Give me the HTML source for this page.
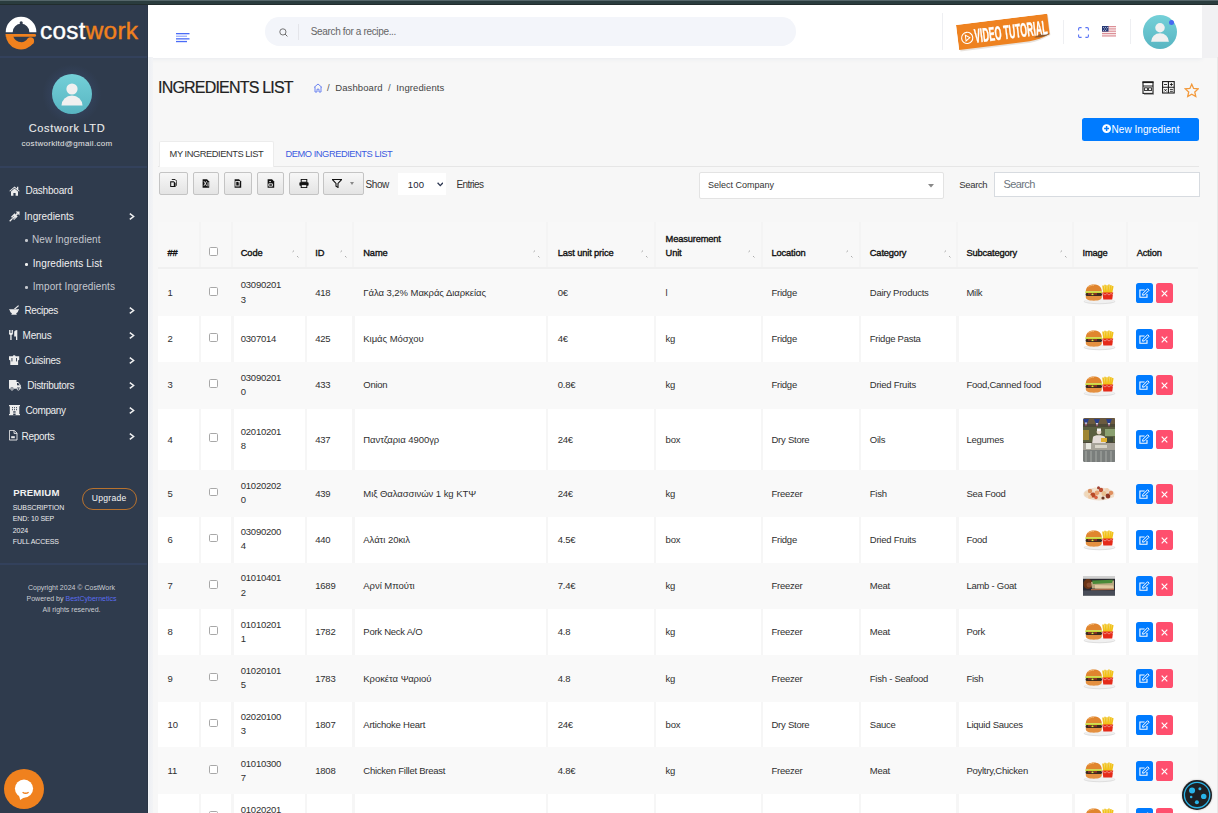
<!DOCTYPE html>
<html><head><meta charset="utf-8">
<style>
*{box-sizing:border-box;margin:0;padding:0}
html,body{width:1218px;height:813px;overflow:hidden;background:#f7f7f7;font-family:"Liberation Sans",sans-serif;color:#222}
.abs{position:absolute;white-space:nowrap}
#topbar{z-index:5;position:absolute;left:0;top:0;width:1218px;height:5px;background:#2a3c3e;border-top:1px solid #55666a;border-bottom:1px solid #222d2d}
#side{position:absolute;left:0;top:0;width:148px;height:813px;background:#2f3b4d;border-right:1px solid #2a3545}
.sep{position:absolute;left:0;width:147px;height:2px;background:#33415c}
.mi{position:absolute;left:0;width:148px;height:14px;color:#f2f2f2;font-size:10px;line-height:14px;letter-spacing:.1px}
.mi .ic{position:absolute;left:9px;top:1px;width:11px;height:11px}
.mi .t{position:absolute;top:0}
.mi .ch{position:absolute;left:128px;top:3px;width:6px;height:8px}
.sub{color:#c9ccd2}
#header{position:absolute;left:148px;top:5px;width:1054px;height:53px;background:#fff;box-shadow:0 1px 4px rgba(110,130,170,.10)}
#rstrip{position:absolute;left:1202px;top:5px;width:16px;height:53px;background:#f1f1f3}
</style></head>
<body>
<div id="topbar"></div>
<div id="side"></div>
<svg class="abs" style="left:2px;top:12px" width="40" height="40" viewBox="0 0 40 40">
    <path d="M3.7 20.2 A15.35 15.35 0 0 1 34.4 20.2 L27.4 20.2 A8.35 8.35 0 0 0 10.7 20.2 Z" fill="#fff"/>
    <circle cx="19.2" cy="10.9" r="1.6" fill="#2f3b4d"/>
    <path d="M3.7 22.1 L32.7 22.1 A1.35 1.35 0 0 1 32.7 24.8 L3.7 24.8Z" fill="#f0811e"/>
    <path d="M7.4 22.1 A11.65 11.65 0 0 0 28.5 28.95" fill="none" stroke="#f0811e" stroke-width="7.4"/>
    <circle cx="28.5" cy="28.95" r="3.6" fill="#f0811e"/>
</svg>
<div class="abs" style="left:40px;top:16px;font-size:24.3px;letter-spacing:.3px;line-height:30px;-webkit-text-stroke:.4px currentColor"><span style="color:#fff">cost</span><span style="color:#f0811e">work</span></div>
<div class="sep" style="top:56px"></div>
<div class="abs" style="left:42px;top:64px;width:60px;height:60px;border-radius:50%;background:radial-gradient(circle,rgba(60,80,120,.35) 40%,rgba(47,59,77,0) 70%)"></div>
<svg class="abs" style="left:52px;top:74px" width="40" height="40" viewBox="0 0 40 40">
    <defs><linearGradient id="av" x1="0" y1="0" x2="0" y2="1"><stop offset="0" stop-color="#74d0d8"/><stop offset="1" stop-color="#58b5c2"/></linearGradient></defs>
    <circle cx="20" cy="20" r="20" fill="url(#av)"/>
    <circle cx="20" cy="15" r="5.6" fill="#f0f0f0"/>
    <path d="M9.5 31.5 A10.5 10 0 0 1 30.5 31.5 Z" fill="#f0f0f0"/>
</svg>
<div class="abs" style="left:0;width:148px;text-align:center;top:121px;font-size:11px;letter-spacing:.64px;color:#ececec;line-height:14px;padding-right:14px;-webkit-text-stroke:.1px currentColor">Costwork LTD</div>
<div class="abs" style="left:0;width:148px;text-align:center;top:138px;font-size:8px;letter-spacing:.3px;color:#e6e6e6;line-height:12px;padding-right:14px">costworkltd@gmail.com</div>
<div class="sep" style="top:165.5px"></div>
<svg class="abs" style="left:9px;top:185.5px" width="11" height="10" viewBox="0 0 11 10"><path d="M0.3 5 L5.5 0.5 L8 2.6 V0.8 H9.3 V3.7 L10.7 5 L10 5.6 L5.5 1.7 L1 5.6Z" fill="#ededed"/><path d="M2 5.5 L5.5 2.5 L9 5.5 V9.8 H6.6 V7 H4.4 V9.8 H2Z" fill="#ededed"/></svg>
<div class="abs" style="left:25.4px;top:184.3px;font-size:10px;line-height:14px;letter-spacing:-0.2px;color:#eeeeee">Dashboard</div>
<svg class="abs" style="left:8.5px;top:210.5px" width="11" height="11" viewBox="0 0 11 11"><path d="M2.03 5.86 L5.57 2.32 L8.68 5.43 L5.14 8.97Z" fill="#ededed"/><path d="M3.6 7.4 L0.7 10.3" stroke="#ededed" stroke-width="1.3"/><path d="M7.1 3.9 L8.6 2.4" stroke="#ededed" stroke-width="1.6"/><path d="M6.6 0.5 L10.5 4.4 L10.6 0.4Z" fill="#ededed"/><path d="M3.3 6.6 L4.6 5.3 M4.6 7.9 L5.9 6.6" stroke="#2f3b4d" stroke-width=".7"/></svg>
<div class="abs" style="left:24.3px;top:209.7px;font-size:10px;line-height:14px;letter-spacing:0px;color:#eeeeee">Ingredients</div>
<svg class="abs" style="left:128.5px;top:212.5px" width="6" height="7" viewBox="0 0 6 7"><path d="M0.8 0.6 L4.6 3.5 L0.8 6.4" fill="none" stroke="#f2f2f2" stroke-width="1.5"/></svg>
<div class="abs" style="left:25px;top:239.4px;width:2.6px;height:2.6px;border-radius:50%;background:#c5c8ce"></div>
<div class="abs" style="left:32px;top:233.0px;font-size:10px;line-height:14px;letter-spacing:0.1px;color:#c5c8ce">New Ingredient</div>
<div class="abs" style="left:25px;top:263.0px;width:2.6px;height:2.6px;border-radius:50%;background:#f2f2f2"></div>
<div class="abs" style="left:32.7px;top:256.6px;font-size:10px;line-height:14px;letter-spacing:0.1px;color:#f2f2f2">Ingredients List</div>
<div class="abs" style="left:25px;top:286.0px;width:2.6px;height:2.6px;border-radius:50%;background:#c5c8ce"></div>
<div class="abs" style="left:32.7px;top:279.6px;font-size:10px;line-height:14px;letter-spacing:0.1px;color:#c5c8ce">Import Ingredients</div>
<svg class="abs" style="left:9px;top:305px" width="10.5" height="10" viewBox="0 0 10.5 10"><path d="M0.2 4.2 H10 V5.2 H9.3 C9.3 6.8 8.3 7.8 7.2 8.2 L7.8 9.8 H2.3 L2.9 8.2 C1.8 7.8 0.9 6.8 0.9 5.2 H0.2Z" fill="#ededed"/><path d="M4.8 4 L9.2 0.2 L10 1 L6.6 4Z" fill="#ededed"/></svg>
<div class="abs" style="left:24.5px;top:304.0px;font-size:10px;line-height:14px;letter-spacing:-0.4px;color:#eeeeee">Recipes</div>
<svg class="abs" style="left:128.5px;top:307px" width="6" height="7" viewBox="0 0 6 7"><path d="M0.8 0.6 L4.6 3.5 L0.8 6.4" fill="none" stroke="#f2f2f2" stroke-width="1.5"/></svg>
<svg class="abs" style="left:9px;top:330px" width="8.5" height="10" viewBox="0 0 8.5 10"><path d="M0 0 H0.9 V3 H1.5 V0 H2.4 V3 H3 V0 H3.9 V4.2 L2.6 5 V10 H1.3 V5 L0 4.2Z" fill="#ededed"/><path d="M8.3 0 V10 H7 V6.4 H5.2 V2.2 C5.2 1 6.3 0 8.3 0Z" fill="#ededed"/></svg>
<div class="abs" style="left:22.5px;top:329.0px;font-size:10px;line-height:14px;letter-spacing:-0.2px;color:#eeeeee">Menus</div>
<svg class="abs" style="left:128.5px;top:332px" width="6" height="7" viewBox="0 0 6 7"><path d="M0.8 0.6 L4.6 3.5 L0.8 6.4" fill="none" stroke="#f2f2f2" stroke-width="1.5"/></svg>
<svg class="abs" style="left:9px;top:354.5px" width="10.5" height="10.5" viewBox="0 0 10.5 10.5"><path d="M0 1.2 H3.8 C4 0.5 4.4 0.2 5.2 0.2 C6 0.2 6.4 0.5 6.6 1.2 H10.2 V4.8 L9.1 5.4 V10.3 H1.3 V5.4 L0 4.8Z" fill="#ededed"/><rect x="2.5" y="3" width="0.9" height="3.4" fill="#2f3b4d"/><rect x="7" y="3" width="0.9" height="3.4" fill="#2f3b4d"/></svg>
<div class="abs" style="left:24.5px;top:354.0px;font-size:10px;line-height:14px;letter-spacing:-0.3px;color:#eeeeee">Cuisines</div>
<svg class="abs" style="left:128.5px;top:357px" width="6" height="7" viewBox="0 0 6 7"><path d="M0.8 0.6 L4.6 3.5 L0.8 6.4" fill="none" stroke="#f2f2f2" stroke-width="1.5"/></svg>
<svg class="abs" style="left:9px;top:380px" width="13" height="10.5" viewBox="0 0 13 10.5"><path d="M0 0 H7.5 V2 H9.2 L11.8 5.2 V7.6 L12.6 8.1 L11.6 8.7 H11 A1.6 1.6 0 0 0 7.8 8.7 H4.6 A1.6 1.6 0 0 0 1.4 8.7 H0Z" fill="#ededed"/><path d="M8 3 L9.2 3 L10.8 5.3 L8 5.3Z" fill="#2f3b4d"/><circle cx="3" cy="9" r="1.2" fill="none" stroke="#ededed" stroke-width="0.8"/><circle cx="9.4" cy="9" r="1.2" fill="none" stroke="#ededed" stroke-width="0.8"/></svg>
<div class="abs" style="left:27.3px;top:379.0px;font-size:10px;line-height:14px;letter-spacing:-0.3px;color:#eeeeee">Distributors</div>
<svg class="abs" style="left:128.5px;top:382px" width="6" height="7" viewBox="0 0 6 7"><path d="M0.8 0.6 L4.6 3.5 L0.8 6.4" fill="none" stroke="#f2f2f2" stroke-width="1.5"/></svg>
<svg class="abs" style="left:9px;top:405px" width="11" height="10.5" viewBox="0 0 11 10.5"><path d="M0 0 H11 V1.2 H10.3 V9.1 H11 V10.2 H0 V9.1 H0.8 V1.2 H0Z" fill="#ededed"/><g fill="#2f3b4d"><rect x="3" y="2.2" width="1" height="1"/><rect x="5" y="2.2" width="1" height="1"/><rect x="7" y="2.2" width="1" height="1"/><rect x="3" y="4.2" width="1" height="1"/><rect x="5" y="4.2" width="1" height="1"/><rect x="7" y="4.2" width="1" height="1"/><rect x="4.2" y="6.3" width="2.4" height="1.3"/><rect x="4.2" y="8.6" width="2.4" height="1.6"/></g></svg>
<div class="abs" style="left:25.5px;top:404.0px;font-size:10px;line-height:14px;letter-spacing:-0.4px;color:#eeeeee">Company</div>
<svg class="abs" style="left:128.5px;top:407px" width="6" height="7" viewBox="0 0 6 7"><path d="M0.8 0.6 L4.6 3.5 L0.8 6.4" fill="none" stroke="#f2f2f2" stroke-width="1.5"/></svg>
<svg class="abs" style="left:9px;top:430px" width="8.5" height="10.5" viewBox="0 0 8.5 10.5"><path d="M0.4 0.4 H5.3 L8 3.1 V10 H0.4Z" fill="none" stroke="#ededed" stroke-width="0.9"/><path d="M5 0.5 V3.4 H8" fill="none" stroke="#ededed" stroke-width="0.9"/><rect x="2.2" y="6.2" width="3.6" height="2" fill="#ededed"/></svg>
<div class="abs" style="left:21.6px;top:429.5px;font-size:10px;line-height:14px;letter-spacing:-0.3px;color:#eeeeee">Reports</div>
<svg class="abs" style="left:128.5px;top:432.5px" width="6" height="7" viewBox="0 0 6 7"><path d="M0.8 0.6 L4.6 3.5 L0.8 6.4" fill="none" stroke="#f2f2f2" stroke-width="1.5"/></svg>
<div class="abs" style="left:13.2px;top:486px;font-size:9.6px;font-weight:bold;letter-spacing:.15px;color:#f2f2f2;line-height:14px">PREMIUM</div>
<div class="abs" style="left:12.8px;top:502px;font-size:7px;letter-spacing:-.1px;color:#ededed;line-height:11.3px;white-space:normal;width:60px">SUBSCRIPTION<br>END: 10 SEP<br>2024<br>FULL ACCESS</div>
<div class="abs" style="left:81.7px;top:488px;width:55px;height:21.5px;border:1.3px solid #b8722e;border-radius:11px;color:#f4f4f4;font-size:8.6px;line-height:19px;text-align:center;letter-spacing:.25px">Upgrade</div>
<div class="sep" style="top:563px"></div>
<div class="abs" style="left:0;width:148px;text-align:center;top:582px;font-size:7px;color:#c9ccd2;line-height:11px;padding-right:5px">Copyright 2024 &copy; CostWork<br>Powered by <span style="color:#5b6cf0">BestCybernetics</span><br>All rights reserved.</div>
<div class="abs" style="left:3.8px;top:768.8px;width:40px;height:40px;border-radius:50%;background:#f0811e"></div>
<svg class="abs" style="left:14px;top:778.5px" width="20" height="22" viewBox="0 0 20 22"><circle cx="10" cy="9.6" r="9.1" fill="#fff"/><path d="M4.5 14.5 L6.2 21 L11.5 17.5Z" fill="#fff"/><path d="M8.6 13.2 Q11.6 15.4 14.6 13.2" fill="none" stroke="#f0811e" stroke-width="1.4"/></svg>
<div id="header"></div>
<div id="rstrip"></div>
<svg class="abs" style="left:176px;top:32.8px" width="14" height="10" viewBox="0 0 14 10"><g fill="#4a6cf7"><rect x="0" y="0" width="13.5" height="1.3"/><rect x="0" y="2.6" width="11" height="1.3" opacity=".55"/><rect x="0" y="5.2" width="13.5" height="1.3"/><rect x="0" y="7.9" width="11" height="1.3"/></g></svg>
<div class="abs" style="left:264.5px;top:17.3px;width:531.5px;height:28.4px;border-radius:14.2px;background:#f3f5fa"></div>
<svg class="abs" style="left:278.5px;top:27.8px" width="9" height="9" viewBox="0 0 9 9"><circle cx="3.9" cy="3.9" r="3.1" fill="none" stroke="#666" stroke-width="0.9"/><path d="M6.1 6.1 L8.4 8.4" stroke="#666" stroke-width="1"/></svg>
<div class="abs" style="left:298px;top:24px;width:1px;height:15.5px;background:#e4e5ea"></div>
<div class="abs" style="left:310.8px;top:25px;font-size:10px;line-height:14px;letter-spacing:-.35px;color:#666">Search for a recipe...</div>
<div class="abs" style="left:942px;top:13px;width:1px;height:37px;background:#eeeff2"></div>
<div class="abs" style="left:956.3px;top:24.7px;width:93px;height:28px;transform:rotate(-7.07deg);transform-origin:0 0">
<svg style="position:absolute;left:0;top:0" width="93" height="28" viewBox="0 0 93 28"><defs><linearGradient id="curl" x1="0" y1="0" x2="1" y2="1"><stop offset="0" stop-color="#c76f22"/><stop offset="1" stop-color="#5e4a3a"/></linearGradient></defs>
<path d="M1.2 1.5 L92.5 1.5 L92.5 21.5 C86 24 80 26 72 26.8 L1.2 26.8Z" fill="#d8d0c8" opacity=".6"/>
<path d="M0 0 L91.8 0 L91.8 20.5 C85 23.3 79 24.8 71 25.3 L0 25.3Z" fill="#ee8220"/>
<path d="M91.8 20.5 C88 17.5 83 17.8 76 22 C82 23 87 22.5 91.8 20.5Z" fill="url(#curl)"/>
<circle cx="9.5" cy="14.2" r="5.6" fill="none" stroke="#fff" stroke-width="1.1"/><path d="M8 11.3 L12.2 14.2 L8 17.1Z" fill="none" stroke="#fff" stroke-width="1"/>
</svg>
<span style="position:absolute;left:16.5px;top:-1.5px;line-height:28px;font-size:19.5px;font-weight:bold;color:#fff;-webkit-text-stroke:.4px #fff;display:inline-block;transform:scaleX(.445);transform-origin:0 50%;white-space:nowrap">VIDEO TUTORIAL</span>
</div>
<div class="abs" style="left:1063.3px;top:20px;width:1px;height:23.5px;background:#eeeff2"></div>
<svg class="abs" style="left:1077.5px;top:27px" width="11" height="11" viewBox="0 0 11 11"><path d="M0.6 3.6 V1.8 A1.2 1.2 0 0 1 1.8 0.6 H3.6 M7.4 0.6 H9.2 A1.2 1.2 0 0 1 10.4 1.8 V3.6 M10.4 7.4 V9.2 A1.2 1.2 0 0 1 9.2 10.4 H7.4 M3.6 10.4 H1.8 A1.2 1.2 0 0 1 0.6 9.2 V7.4" fill="none" stroke="#5a74f5" stroke-width="1.1"/></svg>
<svg class="abs" style="left:1101.8px;top:25.8px" width="14.2" height="11.4" viewBox="0 0 14.2 11.4"><rect width="14.2" height="11.4" fill="#fff"/><g fill="#d9848c"><rect y="0" width="14.2" height="0.9"/><rect y="1.75" width="14.2" height="0.9"/><rect y="3.5" width="14.2" height="0.9"/><rect y="5.25" width="14.2" height="0.9"/><rect y="7" width="14.2" height="0.9"/><rect y="8.75" width="14.2" height="0.9"/><rect y="10.5" width="14.2" height="0.9"/></g><rect width="6.5" height="5.6" fill="#2a3c78"/><g fill="#c8cde0"><rect x="1" y="1" width="1" height="0.8"/><rect x="3" y="1" width="1" height="0.8"/><rect x="5" y="1" width="1" height="0.8"/><rect x="2" y="2.6" width="1" height="0.8"/><rect x="4" y="2.6" width="1" height="0.8"/><rect x="1" y="4" width="1" height="0.8"/><rect x="3" y="4" width="1" height="0.8"/></g></svg>
<div class="abs" style="left:1129.5px;top:19px;width:1px;height:25px;background:#eeeff2"></div>
<svg class="abs" style="left:1142.8px;top:14.8px" width="34" height="34" viewBox="0 0 40 40"><defs><linearGradient id="av2" x1="0" y1="0" x2="0" y2="1"><stop offset="0" stop-color="#74d0d8"/><stop offset="1" stop-color="#58b5c2"/></linearGradient></defs><circle cx="20" cy="20" r="20" fill="url(#av2)"/><circle cx="20" cy="15" r="5.6" fill="#f0f0f0"/><path d="M9.5 31.5 A10.5 10 0 0 1 30.5 31.5 Z" fill="#f0f0f0"/></svg>
<div class="abs" style="left:1169.3px;top:19.6px;width:5px;height:5px;border-radius:50%;background:#4668f2"></div>

<div class="abs" style="left:158px;top:78px;font-size:16px;line-height:20px;letter-spacing:-.8px;color:#222;-webkit-text-stroke:.2px #222">INGREDIENTS LIST</div>
<svg class="abs" style="left:312.5px;top:82.5px" width="10" height="10" viewBox="0 0 10 10"><path d="M1 4.5 L5 1 L9 4.5 M2 3.8 V9 H4 V6.2 H6 V9 H8 V3.8" fill="none" stroke="#6d84f0" stroke-width="1"/></svg>
<div class="abs" style="left:327px;top:81px;font-size:9.5px;line-height:13px;color:#555;letter-spacing:.1px">/&nbsp;&nbsp;<span style="color:#444">Dashboard</span>&nbsp;&nbsp;/&nbsp;&nbsp;<span style="color:#444">Ingredients</span></div>


<!-- right icons -->
<svg class="abs" style="left:1141.5px;top:80.5px" width="12.5" height="14" viewBox="0 0 12.5 14"><rect x="1" y="1" width="10" height="11.4" fill="#fff" stroke="#1a1a1a" stroke-width="1.1"/><rect x="0.5" y="0.5" width="11" height="1.6" fill="#1a1a1a"/><path d="M1 5 H11" stroke="#1a1a1a" stroke-width="1"/><rect x="2.6" y="6.8" width="2.8" height="2.8" fill="none" stroke="#1a1a1a" stroke-width=".9"/><rect x="6.6" y="6.8" width="2.8" height="2.8" fill="none" stroke="#1a1a1a" stroke-width=".9"/><path d="M2 13.3 H11.8 V2" fill="none" stroke="#777" stroke-width=".8"/></svg>
<svg class="abs" style="left:1161.5px;top:80.8px" width="13" height="12.8" viewBox="0 0 13 12.8"><rect x="0.6" y="0.6" width="11.6" height="11.4" fill="#fff" stroke="#1a1a1a" stroke-width="1.1"/><path d="M6.4 0.6 V12 M0.6 6.3 H12.2" stroke="#1a1a1a" stroke-width="1.1"/><path d="M2 3.5 H5 M7.9 3.5 H10.9 M9.4 2 V5 M7.9 8.4 H10.9 M7.9 10.3 H10.9 M2.3 8.1 L4.7 10.5 M4.7 8.1 L2.3 10.5" stroke="#1a1a1a" stroke-width=".9"/></svg>
<svg class="abs" style="left:1183.5px;top:82.5px" width="15.5" height="15" viewBox="0 0 24 23"><path d="M12 1.8 L14.9 8.3 L22 9 L16.7 13.8 L18.2 20.8 L12 17.2 L5.8 20.8 L7.3 13.8 L2 9 L9.1 8.3Z" fill="none" stroke="#f39a3c" stroke-width="2"/></svg>
<div class="abs" style="left:1082.2px;top:118px;width:116.8px;height:22.8px;background:#007bff;border-radius:2.5px"></div>
<svg class="abs" style="left:1102px;top:124.3px" width="9.2" height="9.2" viewBox="0 0 10 10"><circle cx="5" cy="5" r="4.8" fill="#fff"/><path d="M5 2.3 V7.7 M2.3 5 H7.7" stroke="#007bff" stroke-width="1.6"/></svg>
<div class="abs" style="left:1111.5px;top:123px;font-size:10px;line-height:14px;color:#fff;letter-spacing:.05px">New Ingredient</div>

<!-- tabs -->
<div class="abs" style="left:158px;top:166px;width:1041px;height:1px;background:#e6e6e6"></div>
<div class="abs" style="left:158.5px;top:141.4px;width:115px;height:25.6px;background:#fff;border:1px solid #ececec;border-bottom:none;border-radius:2px 2px 0 0"></div>
<div class="abs" style="left:169.6px;top:147.5px;font-size:9.3px;line-height:13px;color:#333;letter-spacing:-.45px">MY INGREDIENTS LIST</div>
<div class="abs" style="left:285.5px;top:147.5px;font-size:9.3px;line-height:13px;color:#3a5ae0;letter-spacing:-.45px">DEMO INGREDIENTS LIST</div>
<div class="abs" style="left:159.1px;top:172.1px;width:28.7px;height:22.8px;border:1px solid #c4c4c4;border-radius:2px;background:linear-gradient(#f7f7f7,#e4e4e4)"></div>
<div class="abs" style="left:192.9px;top:172.1px;width:26.6px;height:22.8px;border:1px solid #c4c4c4;border-radius:2px;background:linear-gradient(#f7f7f7,#e4e4e4)"></div>
<div class="abs" style="left:224.2px;top:172.1px;width:27.5px;height:22.8px;border:1px solid #c4c4c4;border-radius:2px;background:linear-gradient(#f7f7f7,#e4e4e4)"></div>
<div class="abs" style="left:256.7px;top:172.1px;width:27.8px;height:22.8px;border:1px solid #c4c4c4;border-radius:2px;background:linear-gradient(#f7f7f7,#e4e4e4)"></div>
<div class="abs" style="left:289.2px;top:172.1px;width:29.4px;height:22.8px;border:1px solid #c4c4c4;border-radius:2px;background:linear-gradient(#f7f7f7,#e4e4e4)"></div>
<div class="abs" style="left:323.3px;top:172.1px;width:40.7px;height:22.8px;border:1px solid #c4c4c4;border-radius:2px;background:linear-gradient(#f7f7f7,#e4e4e4)"></div>
<svg class="abs" style="left:169.4px;top:178.6px" width="8" height="9" viewBox="0 0 8 9"><path d="M1.2 2.2 H4.8 L6.6 4 V8 H1.2Z" fill="#111"/><path d="M2.8 0.4 H6 L7.8 2.2 V6.8" fill="none" stroke="#111" stroke-width="1"/><rect x="2.2" y="3.4" width="2.6" height="3.6" fill="#eee"/></svg>
<svg class="abs" style="left:202.2px;top:178.6px" width="8" height="9" viewBox="0 0 8 9"><path d="M0.6 0.3 H5 L7.2 2.5 V8.7 H0.6Z" fill="#111"/><path d="M2 2.2 L4.6 6.8 M4.6 2.2 L2 6.8" stroke="#eee" stroke-width=".9"/><rect x="5.6" y="3.2" width=".9" height="4.2" fill="#eee"/></svg>
<svg class="abs" style="left:233.9px;top:178.6px" width="8" height="9" viewBox="0 0 8 9"><path d="M0.6 0.3 H5 L7.2 2.5 V8.7 H0.6Z" fill="#111"/><rect x="1.8" y="2.4" width="3.4" height="4.6" fill="none" stroke="#eee" stroke-width=".9"/><rect x="4.6" y="2" width="1" height="1.6" fill="#eee"/></svg>
<svg class="abs" style="left:266.6px;top:178.6px" width="8" height="9" viewBox="0 0 8 9"><path d="M0.6 0.3 H5 L7.2 2.5 V8.7 H0.6Z" fill="#111"/><path d="M1.8 4.8 H5.4 V7.2 H1.8Z M2.2 2.6 H4" fill="none" stroke="#eee" stroke-width=".9"/></svg>
<svg class="abs" style="left:298.9px;top:178.6px" width="10" height="9" viewBox="0 0 10 9"><rect x="2.2" y="0.4" width="5.6" height="2.8" fill="none" stroke="#111" stroke-width="1"/><rect x="0.4" y="3.2" width="9.2" height="3.6" rx=".8" fill="#111"/><rect x="2.2" y="5.6" width="5.6" height="3" fill="#eee" stroke="#111" stroke-width="1"/></svg>
<svg class="abs" style="left:332.3px;top:178.6px" width="10" height="9" viewBox="0 0 10 9"><path d="M0.3 0.4 H9.7 L6 4.4 V8.4 L4 7.2 V4.4Z" fill="none" stroke="#111" stroke-width="1.1"/></svg>
<svg class="abs" style="left:350px;top:181.5px" width="4" height="3" viewBox="0 0 4 3"><path d="M0 0 H4 L2 3Z" fill="#888"/></svg>
<div class="abs" style="left:365.6px;top:177.5px;font-size:10px;line-height:14px;color:#333;letter-spacing:-.45px">Show</div>
<div class="abs" style="left:398.2px;top:173px;width:47.8px;height:22px;background:#fff"></div>
<div class="abs" style="left:407.7px;top:177.5px;font-size:9.5px;line-height:14px;color:#1b2433;letter-spacing:.3px">100</div>
<svg class="abs" style="left:436.8px;top:181.7px" width="6.5" height="5" viewBox="0 0 6.5 5"><path d="M0.6 0.8 L3.25 3.6 L5.9 0.8" fill="none" stroke="#2b3550" stroke-width="1.3"/></svg>
<div class="abs" style="left:456.5px;top:177.5px;font-size:10px;line-height:14px;color:#333;letter-spacing:-.62px">Entries</div>

<div class="abs" style="left:699.2px;top:172.4px;width:245px;height:26.2px;background:#fff;border:1px solid #e3e3e3;border-radius:2px"></div>
<div class="abs" style="left:707.9px;top:178.5px;font-size:9px;line-height:13px;color:#333;letter-spacing:0">Select Company</div>
<svg class="abs" style="left:927.8px;top:184px" width="6" height="4" viewBox="0 0 6 4"><path d="M0 0 H6 L3 3.5Z" fill="#888"/></svg>
<div class="abs" style="left:959.3px;top:177.8px;font-size:9.5px;line-height:13px;color:#333;letter-spacing:-.35px">Search</div>
<div class="abs" style="left:994px;top:172.4px;width:205.8px;height:24.3px;background:#fff;border:1px solid #d7dbe0"></div>
<div class="abs" style="left:1003.4px;top:177px;font-size:11px;line-height:14px;color:#6c757d;letter-spacing:-.6px">Search</div>

<div class="abs" style="left:148px;top:57px;width:5px;height:756px;background:linear-gradient(90deg,#f6f8fb 0,#eef0f4 30%,#f3f4f6 100%)"></div>
<div class="abs" style="left:1217px;top:57px;width:1px;height:756px;background:#e8e8e8"></div>
<div class="abs" style="z-index:20;left:1182.3px;top:779.6px;width:30.2px;height:30.2px;border-radius:50%;background:#1e2124;box-shadow:0 0 2px rgba(0,0,0,.3)"></div>
<svg class="abs" style="z-index:21;left:1182.3px;top:779.6px" width="30.2" height="30.2" viewBox="0 0 30 30"><circle cx="15" cy="15" r="12.6" fill="none" stroke="#2ab4e8" stroke-width="1.3"/><g fill="#2ab4e8"><circle cx="10" cy="10.5" r="3"/><circle cx="17.8" cy="8.8" r="1.5"/><circle cx="21.6" cy="16.3" r="2.7"/><circle cx="9.1" cy="16.9" r="1.3"/><circle cx="14.8" cy="22.2" r="2"/></g></svg>
<!--TABLE--><div class="abs" style="left:158px;top:222px;width:1039.8px;height:46.4px;background:#f8f8f8"></div>
<div class="abs" style="left:167.6px;top:246px;font-size:9.3px;letter-spacing:-.15px;color:#111;-webkit-text-stroke:.35px #111;line-height:14px">##</div>
<div class="abs" style="left:209px;top:247.4px;width:8.8px;height:8.8px;border:1px solid #a8a8a8;border-radius:1.6px;background:#fff"></div>
<div class="abs" style="left:240.8px;top:246px;font-size:9.3px;letter-spacing:-.15px;color:#111;-webkit-text-stroke:.35px #111;line-height:14px">Code</div>
<div class="abs" style="left:315.3px;top:246px;font-size:9.3px;letter-spacing:-.15px;color:#111;-webkit-text-stroke:.35px #111;line-height:14px">ID</div>
<div class="abs" style="left:363.3px;top:246px;font-size:9.3px;letter-spacing:-.15px;color:#111;-webkit-text-stroke:.35px #111;line-height:14px">Name</div>
<div class="abs" style="left:557.8px;top:246px;font-size:9.3px;letter-spacing:-.15px;color:#111;-webkit-text-stroke:.35px #111;line-height:14px">Last unit price</div>
<div class="abs" style="left:665.6px;top:232px;font-size:9.3px;letter-spacing:-.15px;color:#111;-webkit-text-stroke:.35px #111;line-height:14px">Measurement<br>Unit</div>
<div class="abs" style="left:771.5px;top:246px;font-size:9.3px;letter-spacing:-.15px;color:#111;-webkit-text-stroke:.35px #111;line-height:14px">Location</div>
<div class="abs" style="left:869.8px;top:246px;font-size:9.3px;letter-spacing:-.15px;color:#111;-webkit-text-stroke:.35px #111;line-height:14px">Category</div>
<div class="abs" style="left:966.4px;top:246px;font-size:9.3px;letter-spacing:-.15px;color:#111;-webkit-text-stroke:.35px #111;line-height:14px">Subcategory</div>
<div class="abs" style="left:1082.5px;top:246px;font-size:9.3px;letter-spacing:-.15px;color:#111;-webkit-text-stroke:.35px #111;line-height:14px">Image</div>
<div class="abs" style="left:1136.8px;top:246px;font-size:9.3px;letter-spacing:-.15px;color:#111;-webkit-text-stroke:.35px #111;line-height:14px">Action</div>
<svg class="abs" style="left:292.1px;top:250.2px" width="7" height="8" viewBox="0 0 7 8"><path d="M0.6 1.9 L1.9 0.7 M5.2 6.2 L6.4 7.4" stroke="#9a9a9a" stroke-width="1"/></svg>
<svg class="abs" style="left:339.5px;top:250.2px" width="7" height="8" viewBox="0 0 7 8"><path d="M0.6 1.9 L1.9 0.7 M5.2 6.2 L6.4 7.4" stroke="#9a9a9a" stroke-width="1"/></svg>
<svg class="abs" style="left:533.4px;top:250.2px" width="7" height="8" viewBox="0 0 7 8"><path d="M0.6 1.9 L1.9 0.7 M5.2 6.2 L6.4 7.4" stroke="#9a9a9a" stroke-width="1"/></svg>
<svg class="abs" style="left:641.0px;top:250.2px" width="7" height="8" viewBox="0 0 7 8"><path d="M0.6 1.9 L1.9 0.7 M5.2 6.2 L6.4 7.4" stroke="#9a9a9a" stroke-width="1"/></svg>
<svg class="abs" style="left:748.4px;top:250.2px" width="7" height="8" viewBox="0 0 7 8"><path d="M0.6 1.9 L1.9 0.7 M5.2 6.2 L6.4 7.4" stroke="#9a9a9a" stroke-width="1"/></svg>
<svg class="abs" style="left:846.4px;top:250.2px" width="7" height="8" viewBox="0 0 7 8"><path d="M0.6 1.9 L1.9 0.7 M5.2 6.2 L6.4 7.4" stroke="#9a9a9a" stroke-width="1"/></svg>
<svg class="abs" style="left:943.5px;top:250.2px" width="7" height="8" viewBox="0 0 7 8"><path d="M0.6 1.9 L1.9 0.7 M5.2 6.2 L6.4 7.4" stroke="#9a9a9a" stroke-width="1"/></svg>
<svg class="abs" style="left:1059.5px;top:250.2px" width="7" height="8" viewBox="0 0 7 8"><path d="M0.6 1.9 L1.9 0.7 M5.2 6.2 L6.4 7.4" stroke="#9a9a9a" stroke-width="1"/></svg>
<div class="abs" style="left:199.0px;top:222px;width:2px;height:46.4px;background:#f4f4f4"></div>
<div class="abs" style="left:231.4px;top:222px;width:2px;height:46.4px;background:#f4f4f4"></div>
<div class="abs" style="left:305.0px;top:222px;width:2px;height:46.4px;background:#f4f4f4"></div>
<div class="abs" style="left:352.4px;top:222px;width:2px;height:46.4px;background:#f4f4f4"></div>
<div class="abs" style="left:546.3px;top:222px;width:2px;height:46.4px;background:#f4f4f4"></div>
<div class="abs" style="left:653.9px;top:222px;width:2px;height:46.4px;background:#f4f4f4"></div>
<div class="abs" style="left:761.3px;top:222px;width:2px;height:46.4px;background:#f4f4f4"></div>
<div class="abs" style="left:859.3px;top:222px;width:2px;height:46.4px;background:#f4f4f4"></div>
<div class="abs" style="left:956.4px;top:222px;width:2px;height:46.4px;background:#f4f4f4"></div>
<div class="abs" style="left:1072.4px;top:222px;width:2px;height:46.4px;background:#f4f4f4"></div>
<div class="abs" style="left:1126.4px;top:222px;width:2px;height:46.4px;background:#f4f4f4"></div>
<div class="abs" style="left:158px;top:268.6px;width:1039.8px;height:47.4px;background:#f9f9f9"></div>
<div class="abs" style="left:208.9px;top:286.8px;width:8.8px;height:8.8px;border:1px solid #a8a8a8;border-radius:1.6px;background:#fff"></div>
<div class="abs" style="left:167.6px;top:286.0px;font-size:9.5px;letter-spacing:-.25px;color:#303030;line-height:14px">1</div>
<div class="abs" style="left:240.8px;top:278.3px;font-size:9.5px;letter-spacing:-.25px;color:#303030;line-height:14.3px">03090201<br>3</div>
<div class="abs" style="left:315.3px;top:286.0px;font-size:9.5px;letter-spacing:-.25px;color:#303030;line-height:14px">418</div>
<div class="abs" style="left:363.3px;top:286.0px;font-size:9.5px;letter-spacing:-.05px;color:#303030;line-height:14px">Γάλα 3,2% Μακράς Διαρκείας</div>
<div class="abs" style="left:557.8px;top:286.0px;font-size:9.5px;letter-spacing:-.25px;color:#303030;line-height:14px">0€</div>
<div class="abs" style="left:665.6px;top:286.0px;font-size:9.5px;letter-spacing:-.25px;color:#303030;line-height:14px">l</div>
<div class="abs" style="left:771.5px;top:286.0px;font-size:9.5px;letter-spacing:-.25px;color:#303030;line-height:14px">Fridge</div>
<div class="abs" style="left:869.8px;top:286.0px;font-size:9.5px;letter-spacing:-.25px;color:#303030;line-height:14px">Dairy Products</div>
<div class="abs" style="left:966.4px;top:286.0px;font-size:9.5px;letter-spacing:-.25px;color:#303030;line-height:14px">Milk</div>
<svg class="abs" style="left:1083px;top:283.6px" width="33" height="21" viewBox="0 0 33 21">
<ellipse cx="16.5" cy="17.6" rx="15.8" ry="2.6" fill="#dedede"/><ellipse cx="16.5" cy="17.2" rx="15" ry="2" fill="#f0f0f0"/>
<path d="M20 1.5 L21 9 M22 0.8 L22.5 9 M24 1.2 L24 9 M26 0.5 L25.5 9 M28 1.2 L27 9 M29.8 2 L28.5 9" stroke="#f1c21b" stroke-width="1.6"/>
<path d="M19.3 8.5 H30.2 L29.2 15.5 H20.3Z" fill="#e52a1a"/><path d="M20 9.5 L22 11 L24 9.5 L26 11 L28 9.5 L30 10.5" fill="none" stroke="#fff" stroke-width=".6" opacity=".7"/>
<path d="M2.8 7.3 C2.8 2.3 7 0.4 10.8 0.4 C14.6 0.4 18.8 2.3 18.8 7.3Z" fill="#e0852e"/><path d="M5 3 C7 1.6 9 1.2 11 1.3" stroke="#f2b26a" stroke-width="1" fill="none"/>
<rect x="2.2" y="7.2" width="17.2" height="1.9" rx=".8" fill="#c8d838"/>
<rect x="2.6" y="9" width="16.4" height="3" rx="1.2" fill="#3c2a1e"/><rect x="5" y="9.3" width="3" height="1.2" fill="#b3362a"/><rect x="11" y="9.3" width="3" height="1.2" fill="#b3362a"/><rect x="8.5" y="9.5" width="2" height="1.6" fill="#e8e040"/>
<path d="M2.8 12 H18.8 V13.3 C18.8 15.6 16 16.7 10.8 16.7 C5.6 16.7 2.8 15.6 2.8 13.3Z" fill="#e49040"/>
</svg>
<div class="abs" style="left:1136.2px;top:282.9px;width:16.9px;height:19.9px;background:#007bff;border-radius:2.6px"></div>
<svg class="abs" style="left:1138.6px;top:287.7px" width="11" height="10" viewBox="0 0 11 10"><path d="M5.6 2 H0.9 V9.2 H8 V6" fill="none" stroke="#fff" stroke-width="1.1"/><path d="M3.6 7.2 L3.9 5.4 L8.6 0.7 L10.1 2.2 L5.4 6.9Z" fill="none" stroke="#fff" stroke-width="1"/></svg>
<div class="abs" style="left:1156.1px;top:282.9px;width:16.8px;height:19.9px;background:#ff4f6e;border-radius:2.6px"></div>
<svg class="abs" style="left:1160.8px;top:289.7px" width="7" height="7" viewBox="0 0 7 7"><path d="M0.7 0.7 L6.3 6.3 M6.3 0.7 L0.7 6.3" stroke="#fff" stroke-width="1.2"/></svg>
<div class="abs" style="left:158px;top:316.0px;width:1039.8px;height:46.1px;background:#ffffff"></div>
<div class="abs" style="left:198.8px;top:316.0px;width:2.4px;height:46.1px;background:#f6f6f6"></div>
<div class="abs" style="left:231.2px;top:316.0px;width:2.4px;height:46.1px;background:#f6f6f6"></div>
<div class="abs" style="left:304.8px;top:316.0px;width:2.4px;height:46.1px;background:#f6f6f6"></div>
<div class="abs" style="left:352.2px;top:316.0px;width:2.4px;height:46.1px;background:#f6f6f6"></div>
<div class="abs" style="left:546.1px;top:316.0px;width:2.4px;height:46.1px;background:#f6f6f6"></div>
<div class="abs" style="left:653.7px;top:316.0px;width:2.4px;height:46.1px;background:#f6f6f6"></div>
<div class="abs" style="left:761.1px;top:316.0px;width:2.4px;height:46.1px;background:#f6f6f6"></div>
<div class="abs" style="left:859.1px;top:316.0px;width:2.4px;height:46.1px;background:#f6f6f6"></div>
<div class="abs" style="left:956.2px;top:316.0px;width:2.4px;height:46.1px;background:#f6f6f6"></div>
<div class="abs" style="left:1072.2px;top:316.0px;width:2.4px;height:46.1px;background:#f6f6f6"></div>
<div class="abs" style="left:1126.2px;top:316.0px;width:2.4px;height:46.1px;background:#f6f6f6"></div>
<div class="abs" style="left:208.9px;top:332.9px;width:8.8px;height:8.8px;border:1px solid #a8a8a8;border-radius:1.6px;background:#fff"></div>
<div class="abs" style="left:167.6px;top:332.2px;font-size:9.5px;letter-spacing:-.25px;color:#303030;line-height:14px">2</div>
<div class="abs" style="left:240.8px;top:332.2px;font-size:9.5px;letter-spacing:-.25px;color:#303030;line-height:14px">0307014</div>
<div class="abs" style="left:315.3px;top:332.2px;font-size:9.5px;letter-spacing:-.25px;color:#303030;line-height:14px">425</div>
<div class="abs" style="left:363.3px;top:332.2px;font-size:9.5px;letter-spacing:-.05px;color:#303030;line-height:14px">Κιμάς Μόσχου</div>
<div class="abs" style="left:557.8px;top:332.2px;font-size:9.5px;letter-spacing:-.25px;color:#303030;line-height:14px">4€</div>
<div class="abs" style="left:665.6px;top:332.2px;font-size:9.5px;letter-spacing:-.25px;color:#303030;line-height:14px">kg</div>
<div class="abs" style="left:771.5px;top:332.2px;font-size:9.5px;letter-spacing:-.25px;color:#303030;line-height:14px">Fridge</div>
<div class="abs" style="left:869.8px;top:332.2px;font-size:9.5px;letter-spacing:-.25px;color:#303030;line-height:14px">Fridge Pasta</div>
<div class="abs" style="left:966.4px;top:332.2px;font-size:9.5px;letter-spacing:-.25px;color:#303030;line-height:14px"></div>
<svg class="abs" style="left:1083px;top:329.8px" width="33" height="21" viewBox="0 0 33 21">
<ellipse cx="16.5" cy="17.6" rx="15.8" ry="2.6" fill="#dedede"/><ellipse cx="16.5" cy="17.2" rx="15" ry="2" fill="#f0f0f0"/>
<path d="M20 1.5 L21 9 M22 0.8 L22.5 9 M24 1.2 L24 9 M26 0.5 L25.5 9 M28 1.2 L27 9 M29.8 2 L28.5 9" stroke="#f1c21b" stroke-width="1.6"/>
<path d="M19.3 8.5 H30.2 L29.2 15.5 H20.3Z" fill="#e52a1a"/><path d="M20 9.5 L22 11 L24 9.5 L26 11 L28 9.5 L30 10.5" fill="none" stroke="#fff" stroke-width=".6" opacity=".7"/>
<path d="M2.8 7.3 C2.8 2.3 7 0.4 10.8 0.4 C14.6 0.4 18.8 2.3 18.8 7.3Z" fill="#e0852e"/><path d="M5 3 C7 1.6 9 1.2 11 1.3" stroke="#f2b26a" stroke-width="1" fill="none"/>
<rect x="2.2" y="7.2" width="17.2" height="1.9" rx=".8" fill="#c8d838"/>
<rect x="2.6" y="9" width="16.4" height="3" rx="1.2" fill="#3c2a1e"/><rect x="5" y="9.3" width="3" height="1.2" fill="#b3362a"/><rect x="11" y="9.3" width="3" height="1.2" fill="#b3362a"/><rect x="8.5" y="9.5" width="2" height="1.6" fill="#e8e040"/>
<path d="M2.8 12 H18.8 V13.3 C18.8 15.6 16 16.7 10.8 16.7 C5.6 16.7 2.8 15.6 2.8 13.3Z" fill="#e49040"/>
</svg>
<div class="abs" style="left:1136.2px;top:329.1px;width:16.9px;height:19.9px;background:#007bff;border-radius:2.6px"></div>
<svg class="abs" style="left:1138.6px;top:333.9px" width="11" height="10" viewBox="0 0 11 10"><path d="M5.6 2 H0.9 V9.2 H8 V6" fill="none" stroke="#fff" stroke-width="1.1"/><path d="M3.6 7.2 L3.9 5.4 L8.6 0.7 L10.1 2.2 L5.4 6.9Z" fill="none" stroke="#fff" stroke-width="1"/></svg>
<div class="abs" style="left:1156.1px;top:329.1px;width:16.8px;height:19.9px;background:#ff4f6e;border-radius:2.6px"></div>
<svg class="abs" style="left:1160.8px;top:335.9px" width="7" height="7" viewBox="0 0 7 7"><path d="M0.7 0.7 L6.3 6.3 M6.3 0.7 L0.7 6.3" stroke="#fff" stroke-width="1.2"/></svg>
<div class="abs" style="left:158px;top:362.1px;width:1039.8px;height:46.5px;background:#f9f9f9"></div>
<div class="abs" style="left:208.9px;top:379.0px;width:8.8px;height:8.8px;border:1px solid #a8a8a8;border-radius:1.6px;background:#fff"></div>
<div class="abs" style="left:167.6px;top:378.3px;font-size:9.5px;letter-spacing:-.25px;color:#303030;line-height:14px">3</div>
<div class="abs" style="left:240.8px;top:370.6px;font-size:9.5px;letter-spacing:-.25px;color:#303030;line-height:14.3px">03090201<br>0</div>
<div class="abs" style="left:315.3px;top:378.3px;font-size:9.5px;letter-spacing:-.25px;color:#303030;line-height:14px">433</div>
<div class="abs" style="left:363.3px;top:378.3px;font-size:9.5px;letter-spacing:-.25px;color:#303030;line-height:14px">Onion</div>
<div class="abs" style="left:557.8px;top:378.3px;font-size:9.5px;letter-spacing:-.25px;color:#303030;line-height:14px">0.8€</div>
<div class="abs" style="left:665.6px;top:378.3px;font-size:9.5px;letter-spacing:-.25px;color:#303030;line-height:14px">kg</div>
<div class="abs" style="left:771.5px;top:378.3px;font-size:9.5px;letter-spacing:-.25px;color:#303030;line-height:14px">Fridge</div>
<div class="abs" style="left:869.8px;top:378.3px;font-size:9.5px;letter-spacing:-.25px;color:#303030;line-height:14px">Dried Fruits</div>
<div class="abs" style="left:966.4px;top:378.3px;font-size:9.5px;letter-spacing:-.25px;color:#303030;line-height:14px">Food,Canned food</div>
<svg class="abs" style="left:1083px;top:375.9px" width="33" height="21" viewBox="0 0 33 21">
<ellipse cx="16.5" cy="17.6" rx="15.8" ry="2.6" fill="#dedede"/><ellipse cx="16.5" cy="17.2" rx="15" ry="2" fill="#f0f0f0"/>
<path d="M20 1.5 L21 9 M22 0.8 L22.5 9 M24 1.2 L24 9 M26 0.5 L25.5 9 M28 1.2 L27 9 M29.8 2 L28.5 9" stroke="#f1c21b" stroke-width="1.6"/>
<path d="M19.3 8.5 H30.2 L29.2 15.5 H20.3Z" fill="#e52a1a"/><path d="M20 9.5 L22 11 L24 9.5 L26 11 L28 9.5 L30 10.5" fill="none" stroke="#fff" stroke-width=".6" opacity=".7"/>
<path d="M2.8 7.3 C2.8 2.3 7 0.4 10.8 0.4 C14.6 0.4 18.8 2.3 18.8 7.3Z" fill="#e0852e"/><path d="M5 3 C7 1.6 9 1.2 11 1.3" stroke="#f2b26a" stroke-width="1" fill="none"/>
<rect x="2.2" y="7.2" width="17.2" height="1.9" rx=".8" fill="#c8d838"/>
<rect x="2.6" y="9" width="16.4" height="3" rx="1.2" fill="#3c2a1e"/><rect x="5" y="9.3" width="3" height="1.2" fill="#b3362a"/><rect x="11" y="9.3" width="3" height="1.2" fill="#b3362a"/><rect x="8.5" y="9.5" width="2" height="1.6" fill="#e8e040"/>
<path d="M2.8 12 H18.8 V13.3 C18.8 15.6 16 16.7 10.8 16.7 C5.6 16.7 2.8 15.6 2.8 13.3Z" fill="#e49040"/>
</svg>
<div class="abs" style="left:1136.2px;top:375.2px;width:16.9px;height:19.9px;background:#007bff;border-radius:2.6px"></div>
<svg class="abs" style="left:1138.6px;top:380.0px" width="11" height="10" viewBox="0 0 11 10"><path d="M5.6 2 H0.9 V9.2 H8 V6" fill="none" stroke="#fff" stroke-width="1.1"/><path d="M3.6 7.2 L3.9 5.4 L8.6 0.7 L10.1 2.2 L5.4 6.9Z" fill="none" stroke="#fff" stroke-width="1"/></svg>
<div class="abs" style="left:1156.1px;top:375.2px;width:16.8px;height:19.9px;background:#ff4f6e;border-radius:2.6px"></div>
<svg class="abs" style="left:1160.8px;top:382.0px" width="7" height="7" viewBox="0 0 7 7"><path d="M0.7 0.7 L6.3 6.3 M6.3 0.7 L0.7 6.3" stroke="#fff" stroke-width="1.2"/></svg>
<div class="abs" style="left:158px;top:408.6px;width:1039.8px;height:61.2px;background:#ffffff"></div>
<div class="abs" style="left:198.8px;top:408.6px;width:2.4px;height:61.2px;background:#f6f6f6"></div>
<div class="abs" style="left:231.2px;top:408.6px;width:2.4px;height:61.2px;background:#f6f6f6"></div>
<div class="abs" style="left:304.8px;top:408.6px;width:2.4px;height:61.2px;background:#f6f6f6"></div>
<div class="abs" style="left:352.2px;top:408.6px;width:2.4px;height:61.2px;background:#f6f6f6"></div>
<div class="abs" style="left:546.1px;top:408.6px;width:2.4px;height:61.2px;background:#f6f6f6"></div>
<div class="abs" style="left:653.7px;top:408.6px;width:2.4px;height:61.2px;background:#f6f6f6"></div>
<div class="abs" style="left:761.1px;top:408.6px;width:2.4px;height:61.2px;background:#f6f6f6"></div>
<div class="abs" style="left:859.1px;top:408.6px;width:2.4px;height:61.2px;background:#f6f6f6"></div>
<div class="abs" style="left:956.2px;top:408.6px;width:2.4px;height:61.2px;background:#f6f6f6"></div>
<div class="abs" style="left:1072.2px;top:408.6px;width:2.4px;height:61.2px;background:#f6f6f6"></div>
<div class="abs" style="left:1126.2px;top:408.6px;width:2.4px;height:61.2px;background:#f6f6f6"></div>
<div class="abs" style="left:208.9px;top:433.3px;width:8.8px;height:8.8px;border:1px solid #a8a8a8;border-radius:1.6px;background:#fff"></div>
<div class="abs" style="left:167.6px;top:432.6px;font-size:9.5px;letter-spacing:-.25px;color:#303030;line-height:14px">4</div>
<div class="abs" style="left:240.8px;top:424.9px;font-size:9.5px;letter-spacing:-.25px;color:#303030;line-height:14.3px">02010201<br>8</div>
<div class="abs" style="left:315.3px;top:432.6px;font-size:9.5px;letter-spacing:-.25px;color:#303030;line-height:14px">437</div>
<div class="abs" style="left:363.3px;top:432.6px;font-size:9.5px;letter-spacing:-.05px;color:#303030;line-height:14px">Παντζαρια 4900γρ</div>
<div class="abs" style="left:557.8px;top:432.6px;font-size:9.5px;letter-spacing:-.25px;color:#303030;line-height:14px">24€</div>
<div class="abs" style="left:665.6px;top:432.6px;font-size:9.5px;letter-spacing:-.25px;color:#303030;line-height:14px">box</div>
<div class="abs" style="left:771.5px;top:432.6px;font-size:9.5px;letter-spacing:-.25px;color:#303030;line-height:14px">Dry Store</div>
<div class="abs" style="left:869.8px;top:432.6px;font-size:9.5px;letter-spacing:-.25px;color:#303030;line-height:14px">Oils</div>
<div class="abs" style="left:966.4px;top:432.6px;font-size:9.5px;letter-spacing:-.25px;color:#303030;line-height:14px">Legumes</div>
<svg class="abs" style="left:1082.8px;top:417.6px" width="32.4" height="44" viewBox="0 0 32.4 44"><defs><clipPath id="pc"><rect width="32.4" height="44" rx="1.5"/></clipPath><filter id="pb" x="-5%" y="-5%" width="110%" height="110%"><feGaussianBlur stdDeviation="0.45"/></filter></defs><g clip-path="url(#pc)"><g filter="url(#pb)">
<rect width="32.4" height="44" fill="#4e4a38"/><rect y="0" width="32.4" height="6" fill="#6a5a40"/>
<path d="M0 1 L6 1 L3 8Z" fill="#2c3f8a"/><path d="M11 1 L17 1 L14 8.5Z" fill="#2c3f8a"/><path d="M23 1 L29 1 L26 8.5Z" fill="#2c3f8a"/><path d="M2 4.5 L4 4.5 L3 8Z M13 5 L15 5 L14 8.5Z M25 5 L27 5 L26 8.5Z" fill="#e8e8f0"/><path d="M2.5 6 L3.5 6 L3 8.5Z M13.5 6.5 L14.5 6.5 L14 9Z M25.5 6.5 L26.5 6.5 L26 9Z" fill="#c82828"/>
<rect y="9" width="32.4" height="15" fill="#5a5e40"/><rect x="0" y="12" width="6" height="10" fill="#b09030" opacity=".8"/><rect x="22" y="11" width="10" height="7" fill="#8aa070"/><rect x="24" y="19" width="6" height="5" fill="#404838"/>
<circle cx="16" cy="14" r="2.4" fill="#e8d8c8"/><rect x="14" y="10.5" width="4" height="2.5" fill="#f0f0f0"/><path d="M10 19 C11 16.5 20 16.5 22 19 L23 26 H9Z" fill="#e4dcd8"/><rect x="18" y="20" width="6" height="4" fill="#e0b030"/>
<rect y="25" width="32.4" height="8" fill="#a8a49a"/><rect x="3" y="25" width="5" height="6" fill="#e8e8e0"/><rect x="12" y="27" width="12" height="3" fill="#d8d4c8"/>
<rect y="32" width="32.4" height="12" fill="#7a7e7c"/><path d="M3 33 V44 M8 33 V44 M13 33 V44 M18 33 V44 M23 33 V44 M28 33 V44" stroke="#a0a4a0" stroke-width="1.2"/>
</g></g></svg>
<div class="abs" style="left:1136.2px;top:429.5px;width:16.9px;height:19.9px;background:#007bff;border-radius:2.6px"></div>
<svg class="abs" style="left:1138.6px;top:434.3px" width="11" height="10" viewBox="0 0 11 10"><path d="M5.6 2 H0.9 V9.2 H8 V6" fill="none" stroke="#fff" stroke-width="1.1"/><path d="M3.6 7.2 L3.9 5.4 L8.6 0.7 L10.1 2.2 L5.4 6.9Z" fill="none" stroke="#fff" stroke-width="1"/></svg>
<div class="abs" style="left:1156.1px;top:429.5px;width:16.8px;height:19.9px;background:#ff4f6e;border-radius:2.6px"></div>
<svg class="abs" style="left:1160.8px;top:436.3px" width="7" height="7" viewBox="0 0 7 7"><path d="M0.7 0.7 L6.3 6.3 M6.3 0.7 L0.7 6.3" stroke="#fff" stroke-width="1.2"/></svg>
<div class="abs" style="left:158px;top:469.8px;width:1039.8px;height:46.8px;background:#f9f9f9"></div>
<div class="abs" style="left:208.9px;top:487.5px;width:8.8px;height:8.8px;border:1px solid #a8a8a8;border-radius:1.6px;background:#fff"></div>
<div class="abs" style="left:167.6px;top:486.8px;font-size:9.5px;letter-spacing:-.25px;color:#303030;line-height:14px">5</div>
<div class="abs" style="left:240.8px;top:479.1px;font-size:9.5px;letter-spacing:-.25px;color:#303030;line-height:14.3px">01020202<br>0</div>
<div class="abs" style="left:315.3px;top:486.8px;font-size:9.5px;letter-spacing:-.25px;color:#303030;line-height:14px">439</div>
<div class="abs" style="left:363.3px;top:486.8px;font-size:9.5px;letter-spacing:-.05px;color:#303030;line-height:14px">Μιξ Θαλασσινών 1 kg ΚΤΨ</div>
<div class="abs" style="left:557.8px;top:486.8px;font-size:9.5px;letter-spacing:-.25px;color:#303030;line-height:14px">24€</div>
<div class="abs" style="left:665.6px;top:486.8px;font-size:9.5px;letter-spacing:-.25px;color:#303030;line-height:14px">kg</div>
<div class="abs" style="left:771.5px;top:486.8px;font-size:9.5px;letter-spacing:-.25px;color:#303030;line-height:14px">Freezer</div>
<div class="abs" style="left:869.8px;top:486.8px;font-size:9.5px;letter-spacing:-.25px;color:#303030;line-height:14px">Fish</div>
<div class="abs" style="left:966.4px;top:486.8px;font-size:9.5px;letter-spacing:-.25px;color:#303030;line-height:14px">Sea Food</div>
<svg class="abs" style="left:1083px;top:485.2px" width="32" height="16" viewBox="0 0 32 16"><defs><filter id="sb"><feGaussianBlur stdDeviation="0.35"/></filter></defs><g filter="url(#sb)">
<ellipse cx="16" cy="9" rx="15.5" ry="6.5" fill="#e8d0b8" opacity=".7"/>
<circle cx="4" cy="9" r="2.4" fill="#f0d8b8"/><circle cx="7" cy="6" r="2.2" fill="#d89060"/><circle cx="10" cy="10" r="2.6" fill="#b84828"/><circle cx="12" cy="4.5" r="2" fill="#f4e4cc"/><circle cx="14" cy="8" r="2.4" fill="#e8a070"/><circle cx="17" cy="11.5" r="2.4" fill="#f0e0c8"/><circle cx="18" cy="5" r="2.2" fill="#c05030"/><circle cx="21" cy="8.5" r="2.5" fill="#e8c090"/><circle cx="24" cy="5" r="2" fill="#f0d0b0"/><circle cx="25" cy="11" r="2.4" fill="#903828"/><circle cx="28" cy="8" r="2.2" fill="#e09060"/><circle cx="7" cy="12" r="2" fill="#f0c8a0"/><circle cx="13" cy="12.5" r="1.8" fill="#d86040"/><circle cx="20" cy="13" r="1.6" fill="#6a3828"/><circle cx="29.5" cy="11" r="1.6" fill="#f4e0c8"/><circle cx="15.5" cy="2.8" r="1.5" fill="#a04030"/>
</g></svg>
<div class="abs" style="left:1136.2px;top:483.7px;width:16.9px;height:19.9px;background:#007bff;border-radius:2.6px"></div>
<svg class="abs" style="left:1138.6px;top:488.5px" width="11" height="10" viewBox="0 0 11 10"><path d="M5.6 2 H0.9 V9.2 H8 V6" fill="none" stroke="#fff" stroke-width="1.1"/><path d="M3.6 7.2 L3.9 5.4 L8.6 0.7 L10.1 2.2 L5.4 6.9Z" fill="none" stroke="#fff" stroke-width="1"/></svg>
<div class="abs" style="left:1156.1px;top:483.7px;width:16.8px;height:19.9px;background:#ff4f6e;border-radius:2.6px"></div>
<svg class="abs" style="left:1160.8px;top:490.5px" width="7" height="7" viewBox="0 0 7 7"><path d="M0.7 0.7 L6.3 6.3 M6.3 0.7 L0.7 6.3" stroke="#fff" stroke-width="1.2"/></svg>
<div class="abs" style="left:158px;top:516.6px;width:1039.8px;height:46.1px;background:#ffffff"></div>
<div class="abs" style="left:198.8px;top:516.6px;width:2.4px;height:46.1px;background:#f6f6f6"></div>
<div class="abs" style="left:231.2px;top:516.6px;width:2.4px;height:46.1px;background:#f6f6f6"></div>
<div class="abs" style="left:304.8px;top:516.6px;width:2.4px;height:46.1px;background:#f6f6f6"></div>
<div class="abs" style="left:352.2px;top:516.6px;width:2.4px;height:46.1px;background:#f6f6f6"></div>
<div class="abs" style="left:546.1px;top:516.6px;width:2.4px;height:46.1px;background:#f6f6f6"></div>
<div class="abs" style="left:653.7px;top:516.6px;width:2.4px;height:46.1px;background:#f6f6f6"></div>
<div class="abs" style="left:761.1px;top:516.6px;width:2.4px;height:46.1px;background:#f6f6f6"></div>
<div class="abs" style="left:859.1px;top:516.6px;width:2.4px;height:46.1px;background:#f6f6f6"></div>
<div class="abs" style="left:956.2px;top:516.6px;width:2.4px;height:46.1px;background:#f6f6f6"></div>
<div class="abs" style="left:1072.2px;top:516.6px;width:2.4px;height:46.1px;background:#f6f6f6"></div>
<div class="abs" style="left:1126.2px;top:516.6px;width:2.4px;height:46.1px;background:#f6f6f6"></div>
<div class="abs" style="left:208.9px;top:533.5px;width:8.8px;height:8.8px;border:1px solid #a8a8a8;border-radius:1.6px;background:#fff"></div>
<div class="abs" style="left:167.6px;top:532.8px;font-size:9.5px;letter-spacing:-.25px;color:#303030;line-height:14px">6</div>
<div class="abs" style="left:240.8px;top:525.1px;font-size:9.5px;letter-spacing:-.25px;color:#303030;line-height:14.3px">03090200<br>4</div>
<div class="abs" style="left:315.3px;top:532.8px;font-size:9.5px;letter-spacing:-.25px;color:#303030;line-height:14px">440</div>
<div class="abs" style="left:363.3px;top:532.8px;font-size:9.5px;letter-spacing:-.05px;color:#303030;line-height:14px">Αλάτι 20κιλ</div>
<div class="abs" style="left:557.8px;top:532.8px;font-size:9.5px;letter-spacing:-.25px;color:#303030;line-height:14px">4.5€</div>
<div class="abs" style="left:665.6px;top:532.8px;font-size:9.5px;letter-spacing:-.25px;color:#303030;line-height:14px">box</div>
<div class="abs" style="left:771.5px;top:532.8px;font-size:9.5px;letter-spacing:-.25px;color:#303030;line-height:14px">Fridge</div>
<div class="abs" style="left:869.8px;top:532.8px;font-size:9.5px;letter-spacing:-.25px;color:#303030;line-height:14px">Dried Fruits</div>
<div class="abs" style="left:966.4px;top:532.8px;font-size:9.5px;letter-spacing:-.25px;color:#303030;line-height:14px">Food</div>
<svg class="abs" style="left:1083px;top:530.4px" width="33" height="21" viewBox="0 0 33 21">
<ellipse cx="16.5" cy="17.6" rx="15.8" ry="2.6" fill="#dedede"/><ellipse cx="16.5" cy="17.2" rx="15" ry="2" fill="#f0f0f0"/>
<path d="M20 1.5 L21 9 M22 0.8 L22.5 9 M24 1.2 L24 9 M26 0.5 L25.5 9 M28 1.2 L27 9 M29.8 2 L28.5 9" stroke="#f1c21b" stroke-width="1.6"/>
<path d="M19.3 8.5 H30.2 L29.2 15.5 H20.3Z" fill="#e52a1a"/><path d="M20 9.5 L22 11 L24 9.5 L26 11 L28 9.5 L30 10.5" fill="none" stroke="#fff" stroke-width=".6" opacity=".7"/>
<path d="M2.8 7.3 C2.8 2.3 7 0.4 10.8 0.4 C14.6 0.4 18.8 2.3 18.8 7.3Z" fill="#e0852e"/><path d="M5 3 C7 1.6 9 1.2 11 1.3" stroke="#f2b26a" stroke-width="1" fill="none"/>
<rect x="2.2" y="7.2" width="17.2" height="1.9" rx=".8" fill="#c8d838"/>
<rect x="2.6" y="9" width="16.4" height="3" rx="1.2" fill="#3c2a1e"/><rect x="5" y="9.3" width="3" height="1.2" fill="#b3362a"/><rect x="11" y="9.3" width="3" height="1.2" fill="#b3362a"/><rect x="8.5" y="9.5" width="2" height="1.6" fill="#e8e040"/>
<path d="M2.8 12 H18.8 V13.3 C18.8 15.6 16 16.7 10.8 16.7 C5.6 16.7 2.8 15.6 2.8 13.3Z" fill="#e49040"/>
</svg>
<div class="abs" style="left:1136.2px;top:529.7px;width:16.9px;height:19.9px;background:#007bff;border-radius:2.6px"></div>
<svg class="abs" style="left:1138.6px;top:534.5px" width="11" height="10" viewBox="0 0 11 10"><path d="M5.6 2 H0.9 V9.2 H8 V6" fill="none" stroke="#fff" stroke-width="1.1"/><path d="M3.6 7.2 L3.9 5.4 L8.6 0.7 L10.1 2.2 L5.4 6.9Z" fill="none" stroke="#fff" stroke-width="1"/></svg>
<div class="abs" style="left:1156.1px;top:529.7px;width:16.8px;height:19.9px;background:#ff4f6e;border-radius:2.6px"></div>
<svg class="abs" style="left:1160.8px;top:536.5px" width="7" height="7" viewBox="0 0 7 7"><path d="M0.7 0.7 L6.3 6.3 M6.3 0.7 L0.7 6.3" stroke="#fff" stroke-width="1.2"/></svg>
<div class="abs" style="left:158px;top:562.8px;width:1039.8px;height:46.2px;background:#f9f9f9"></div>
<div class="abs" style="left:208.9px;top:579.8px;width:8.8px;height:8.8px;border:1px solid #a8a8a8;border-radius:1.6px;background:#fff"></div>
<div class="abs" style="left:167.6px;top:579.0px;font-size:9.5px;letter-spacing:-.25px;color:#303030;line-height:14px">7</div>
<div class="abs" style="left:240.8px;top:571.3px;font-size:9.5px;letter-spacing:-.25px;color:#303030;line-height:14.3px">01010401<br>2</div>
<div class="abs" style="left:315.3px;top:579.0px;font-size:9.5px;letter-spacing:-.25px;color:#303030;line-height:14px">1689</div>
<div class="abs" style="left:363.3px;top:579.0px;font-size:9.5px;letter-spacing:-.05px;color:#303030;line-height:14px">Αρνί Μπούτι</div>
<div class="abs" style="left:557.8px;top:579.0px;font-size:9.5px;letter-spacing:-.25px;color:#303030;line-height:14px">7.4€</div>
<div class="abs" style="left:665.6px;top:579.0px;font-size:9.5px;letter-spacing:-.25px;color:#303030;line-height:14px">kg</div>
<div class="abs" style="left:771.5px;top:579.0px;font-size:9.5px;letter-spacing:-.25px;color:#303030;line-height:14px">Freezer</div>
<div class="abs" style="left:869.8px;top:579.0px;font-size:9.5px;letter-spacing:-.25px;color:#303030;line-height:14px">Meat</div>
<div class="abs" style="left:966.4px;top:579.0px;font-size:9.5px;letter-spacing:-.25px;color:#303030;line-height:14px">Lamb - Goat</div>
<svg class="abs" style="left:1082.6px;top:576.1px" width="32.3" height="19.5" viewBox="0 0 32.3 19.5"><defs><filter id="lb"><feGaussianBlur stdDeviation="0.4"/></filter></defs><g filter="url(#lb)">
<rect width="32.3" height="19.5" fill="#2a2c30"/><rect width="32.3" height="2.8" fill="#d0d0d0"/>
<ellipse cx="5" cy="8" rx="4.5" ry="5" fill="#6a3418"/><ellipse cx="6" cy="9" rx="2.5" ry="2.5" fill="#8a5030"/><path d="M8 6 L31 4.5 L31 13 L9 12.5Z" fill="#b8a880"/><path d="M9 4.5 L30 3.8 L29 7 L10 8Z" fill="#4a8a38"/><path d="M12 9 L30 9.5 L31 13 L12 12.5Z" fill="#e0c8a0"/><path d="M8 13 L31 12.5 L31 14 L8 14.5Z" fill="#a86848"/>
<rect y="14.5" width="32.3" height="5" fill="#4a4e58"/>
</g></svg>
<div class="abs" style="left:1136.2px;top:575.9px;width:16.9px;height:19.9px;background:#007bff;border-radius:2.6px"></div>
<svg class="abs" style="left:1138.6px;top:580.7px" width="11" height="10" viewBox="0 0 11 10"><path d="M5.6 2 H0.9 V9.2 H8 V6" fill="none" stroke="#fff" stroke-width="1.1"/><path d="M3.6 7.2 L3.9 5.4 L8.6 0.7 L10.1 2.2 L5.4 6.9Z" fill="none" stroke="#fff" stroke-width="1"/></svg>
<div class="abs" style="left:1156.1px;top:575.9px;width:16.8px;height:19.9px;background:#ff4f6e;border-radius:2.6px"></div>
<svg class="abs" style="left:1160.8px;top:582.7px" width="7" height="7" viewBox="0 0 7 7"><path d="M0.7 0.7 L6.3 6.3 M6.3 0.7 L0.7 6.3" stroke="#fff" stroke-width="1.2"/></svg>
<div class="abs" style="left:158px;top:609.0px;width:1039.8px;height:46.4px;background:#ffffff"></div>
<div class="abs" style="left:198.8px;top:609.0px;width:2.4px;height:46.4px;background:#f6f6f6"></div>
<div class="abs" style="left:231.2px;top:609.0px;width:2.4px;height:46.4px;background:#f6f6f6"></div>
<div class="abs" style="left:304.8px;top:609.0px;width:2.4px;height:46.4px;background:#f6f6f6"></div>
<div class="abs" style="left:352.2px;top:609.0px;width:2.4px;height:46.4px;background:#f6f6f6"></div>
<div class="abs" style="left:546.1px;top:609.0px;width:2.4px;height:46.4px;background:#f6f6f6"></div>
<div class="abs" style="left:653.7px;top:609.0px;width:2.4px;height:46.4px;background:#f6f6f6"></div>
<div class="abs" style="left:761.1px;top:609.0px;width:2.4px;height:46.4px;background:#f6f6f6"></div>
<div class="abs" style="left:859.1px;top:609.0px;width:2.4px;height:46.4px;background:#f6f6f6"></div>
<div class="abs" style="left:956.2px;top:609.0px;width:2.4px;height:46.4px;background:#f6f6f6"></div>
<div class="abs" style="left:1072.2px;top:609.0px;width:2.4px;height:46.4px;background:#f6f6f6"></div>
<div class="abs" style="left:1126.2px;top:609.0px;width:2.4px;height:46.4px;background:#f6f6f6"></div>
<div class="abs" style="left:208.9px;top:626.1px;width:8.8px;height:8.8px;border:1px solid #a8a8a8;border-radius:1.6px;background:#fff"></div>
<div class="abs" style="left:167.6px;top:625.4px;font-size:9.5px;letter-spacing:-.25px;color:#303030;line-height:14px">8</div>
<div class="abs" style="left:240.8px;top:617.7px;font-size:9.5px;letter-spacing:-.25px;color:#303030;line-height:14.3px">01010201<br>1</div>
<div class="abs" style="left:315.3px;top:625.4px;font-size:9.5px;letter-spacing:-.25px;color:#303030;line-height:14px">1782</div>
<div class="abs" style="left:363.3px;top:625.4px;font-size:9.5px;letter-spacing:-.25px;color:#303030;line-height:14px">Pork Neck A/O</div>
<div class="abs" style="left:557.8px;top:625.4px;font-size:9.5px;letter-spacing:-.25px;color:#303030;line-height:14px">4.8</div>
<div class="abs" style="left:665.6px;top:625.4px;font-size:9.5px;letter-spacing:-.25px;color:#303030;line-height:14px">kg</div>
<div class="abs" style="left:771.5px;top:625.4px;font-size:9.5px;letter-spacing:-.25px;color:#303030;line-height:14px">Freezer</div>
<div class="abs" style="left:869.8px;top:625.4px;font-size:9.5px;letter-spacing:-.25px;color:#303030;line-height:14px">Meat</div>
<div class="abs" style="left:966.4px;top:625.4px;font-size:9.5px;letter-spacing:-.25px;color:#303030;line-height:14px">Pork</div>
<svg class="abs" style="left:1083px;top:623.0px" width="33" height="21" viewBox="0 0 33 21">
<ellipse cx="16.5" cy="17.6" rx="15.8" ry="2.6" fill="#dedede"/><ellipse cx="16.5" cy="17.2" rx="15" ry="2" fill="#f0f0f0"/>
<path d="M20 1.5 L21 9 M22 0.8 L22.5 9 M24 1.2 L24 9 M26 0.5 L25.5 9 M28 1.2 L27 9 M29.8 2 L28.5 9" stroke="#f1c21b" stroke-width="1.6"/>
<path d="M19.3 8.5 H30.2 L29.2 15.5 H20.3Z" fill="#e52a1a"/><path d="M20 9.5 L22 11 L24 9.5 L26 11 L28 9.5 L30 10.5" fill="none" stroke="#fff" stroke-width=".6" opacity=".7"/>
<path d="M2.8 7.3 C2.8 2.3 7 0.4 10.8 0.4 C14.6 0.4 18.8 2.3 18.8 7.3Z" fill="#e0852e"/><path d="M5 3 C7 1.6 9 1.2 11 1.3" stroke="#f2b26a" stroke-width="1" fill="none"/>
<rect x="2.2" y="7.2" width="17.2" height="1.9" rx=".8" fill="#c8d838"/>
<rect x="2.6" y="9" width="16.4" height="3" rx="1.2" fill="#3c2a1e"/><rect x="5" y="9.3" width="3" height="1.2" fill="#b3362a"/><rect x="11" y="9.3" width="3" height="1.2" fill="#b3362a"/><rect x="8.5" y="9.5" width="2" height="1.6" fill="#e8e040"/>
<path d="M2.8 12 H18.8 V13.3 C18.8 15.6 16 16.7 10.8 16.7 C5.6 16.7 2.8 15.6 2.8 13.3Z" fill="#e49040"/>
</svg>
<div class="abs" style="left:1136.2px;top:622.2px;width:16.9px;height:19.9px;background:#007bff;border-radius:2.6px"></div>
<svg class="abs" style="left:1138.6px;top:627.0px" width="11" height="10" viewBox="0 0 11 10"><path d="M5.6 2 H0.9 V9.2 H8 V6" fill="none" stroke="#fff" stroke-width="1.1"/><path d="M3.6 7.2 L3.9 5.4 L8.6 0.7 L10.1 2.2 L5.4 6.9Z" fill="none" stroke="#fff" stroke-width="1"/></svg>
<div class="abs" style="left:1156.1px;top:622.2px;width:16.8px;height:19.9px;background:#ff4f6e;border-radius:2.6px"></div>
<svg class="abs" style="left:1160.8px;top:629.0px" width="7" height="7" viewBox="0 0 7 7"><path d="M0.7 0.7 L6.3 6.3 M6.3 0.7 L0.7 6.3" stroke="#fff" stroke-width="1.2"/></svg>
<div class="abs" style="left:158px;top:655.4px;width:1039.8px;height:46.2px;background:#f9f9f9"></div>
<div class="abs" style="left:208.9px;top:672.5px;width:8.8px;height:8.8px;border:1px solid #a8a8a8;border-radius:1.6px;background:#fff"></div>
<div class="abs" style="left:167.6px;top:671.8px;font-size:9.5px;letter-spacing:-.25px;color:#303030;line-height:14px">9</div>
<div class="abs" style="left:240.8px;top:664.1px;font-size:9.5px;letter-spacing:-.25px;color:#303030;line-height:14.3px">01020101<br>5</div>
<div class="abs" style="left:315.3px;top:671.8px;font-size:9.5px;letter-spacing:-.25px;color:#303030;line-height:14px">1783</div>
<div class="abs" style="left:363.3px;top:671.8px;font-size:9.5px;letter-spacing:-.05px;color:#303030;line-height:14px">Κροκέτα Ψαριού</div>
<div class="abs" style="left:557.8px;top:671.8px;font-size:9.5px;letter-spacing:-.25px;color:#303030;line-height:14px">4.8</div>
<div class="abs" style="left:665.6px;top:671.8px;font-size:9.5px;letter-spacing:-.25px;color:#303030;line-height:14px">kg</div>
<div class="abs" style="left:771.5px;top:671.8px;font-size:9.5px;letter-spacing:-.25px;color:#303030;line-height:14px">Freezer</div>
<div class="abs" style="left:869.8px;top:671.8px;font-size:9.5px;letter-spacing:-.25px;color:#303030;line-height:14px">Fish - Seafood</div>
<div class="abs" style="left:966.4px;top:671.8px;font-size:9.5px;letter-spacing:-.25px;color:#303030;line-height:14px">Fish</div>
<svg class="abs" style="left:1083px;top:669.4px" width="33" height="21" viewBox="0 0 33 21">
<ellipse cx="16.5" cy="17.6" rx="15.8" ry="2.6" fill="#dedede"/><ellipse cx="16.5" cy="17.2" rx="15" ry="2" fill="#f0f0f0"/>
<path d="M20 1.5 L21 9 M22 0.8 L22.5 9 M24 1.2 L24 9 M26 0.5 L25.5 9 M28 1.2 L27 9 M29.8 2 L28.5 9" stroke="#f1c21b" stroke-width="1.6"/>
<path d="M19.3 8.5 H30.2 L29.2 15.5 H20.3Z" fill="#e52a1a"/><path d="M20 9.5 L22 11 L24 9.5 L26 11 L28 9.5 L30 10.5" fill="none" stroke="#fff" stroke-width=".6" opacity=".7"/>
<path d="M2.8 7.3 C2.8 2.3 7 0.4 10.8 0.4 C14.6 0.4 18.8 2.3 18.8 7.3Z" fill="#e0852e"/><path d="M5 3 C7 1.6 9 1.2 11 1.3" stroke="#f2b26a" stroke-width="1" fill="none"/>
<rect x="2.2" y="7.2" width="17.2" height="1.9" rx=".8" fill="#c8d838"/>
<rect x="2.6" y="9" width="16.4" height="3" rx="1.2" fill="#3c2a1e"/><rect x="5" y="9.3" width="3" height="1.2" fill="#b3362a"/><rect x="11" y="9.3" width="3" height="1.2" fill="#b3362a"/><rect x="8.5" y="9.5" width="2" height="1.6" fill="#e8e040"/>
<path d="M2.8 12 H18.8 V13.3 C18.8 15.6 16 16.7 10.8 16.7 C5.6 16.7 2.8 15.6 2.8 13.3Z" fill="#e49040"/>
</svg>
<div class="abs" style="left:1136.2px;top:668.6px;width:16.9px;height:19.9px;background:#007bff;border-radius:2.6px"></div>
<svg class="abs" style="left:1138.6px;top:673.4px" width="11" height="10" viewBox="0 0 11 10"><path d="M5.6 2 H0.9 V9.2 H8 V6" fill="none" stroke="#fff" stroke-width="1.1"/><path d="M3.6 7.2 L3.9 5.4 L8.6 0.7 L10.1 2.2 L5.4 6.9Z" fill="none" stroke="#fff" stroke-width="1"/></svg>
<div class="abs" style="left:1156.1px;top:668.6px;width:16.8px;height:19.9px;background:#ff4f6e;border-radius:2.6px"></div>
<svg class="abs" style="left:1160.8px;top:675.4px" width="7" height="7" viewBox="0 0 7 7"><path d="M0.7 0.7 L6.3 6.3 M6.3 0.7 L0.7 6.3" stroke="#fff" stroke-width="1.2"/></svg>
<div class="abs" style="left:158px;top:701.6px;width:1039.8px;height:45.4px;background:#ffffff"></div>
<div class="abs" style="left:198.8px;top:701.6px;width:2.4px;height:45.4px;background:#f6f6f6"></div>
<div class="abs" style="left:231.2px;top:701.6px;width:2.4px;height:45.4px;background:#f6f6f6"></div>
<div class="abs" style="left:304.8px;top:701.6px;width:2.4px;height:45.4px;background:#f6f6f6"></div>
<div class="abs" style="left:352.2px;top:701.6px;width:2.4px;height:45.4px;background:#f6f6f6"></div>
<div class="abs" style="left:546.1px;top:701.6px;width:2.4px;height:45.4px;background:#f6f6f6"></div>
<div class="abs" style="left:653.7px;top:701.6px;width:2.4px;height:45.4px;background:#f6f6f6"></div>
<div class="abs" style="left:761.1px;top:701.6px;width:2.4px;height:45.4px;background:#f6f6f6"></div>
<div class="abs" style="left:859.1px;top:701.6px;width:2.4px;height:45.4px;background:#f6f6f6"></div>
<div class="abs" style="left:956.2px;top:701.6px;width:2.4px;height:45.4px;background:#f6f6f6"></div>
<div class="abs" style="left:1072.2px;top:701.6px;width:2.4px;height:45.4px;background:#f6f6f6"></div>
<div class="abs" style="left:1126.2px;top:701.6px;width:2.4px;height:45.4px;background:#f6f6f6"></div>
<div class="abs" style="left:208.9px;top:718.6px;width:8.8px;height:8.8px;border:1px solid #a8a8a8;border-radius:1.6px;background:#fff"></div>
<div class="abs" style="left:167.6px;top:717.9px;font-size:9.5px;letter-spacing:-.25px;color:#303030;line-height:14px">10</div>
<div class="abs" style="left:240.8px;top:710.2px;font-size:9.5px;letter-spacing:-.25px;color:#303030;line-height:14.3px">02020100<br>3</div>
<div class="abs" style="left:315.3px;top:717.9px;font-size:9.5px;letter-spacing:-.25px;color:#303030;line-height:14px">1807</div>
<div class="abs" style="left:363.3px;top:717.9px;font-size:9.5px;letter-spacing:-.25px;color:#303030;line-height:14px">Artichoke Heart</div>
<div class="abs" style="left:557.8px;top:717.9px;font-size:9.5px;letter-spacing:-.25px;color:#303030;line-height:14px">24€</div>
<div class="abs" style="left:665.6px;top:717.9px;font-size:9.5px;letter-spacing:-.25px;color:#303030;line-height:14px">box</div>
<div class="abs" style="left:771.5px;top:717.9px;font-size:9.5px;letter-spacing:-.25px;color:#303030;line-height:14px">Dry Store</div>
<div class="abs" style="left:869.8px;top:717.9px;font-size:9.5px;letter-spacing:-.25px;color:#303030;line-height:14px">Sauce</div>
<div class="abs" style="left:966.4px;top:717.9px;font-size:9.5px;letter-spacing:-.25px;color:#303030;line-height:14px">Liquid Sauces</div>
<svg class="abs" style="left:1083px;top:715.5px" width="33" height="21" viewBox="0 0 33 21">
<ellipse cx="16.5" cy="17.6" rx="15.8" ry="2.6" fill="#dedede"/><ellipse cx="16.5" cy="17.2" rx="15" ry="2" fill="#f0f0f0"/>
<path d="M20 1.5 L21 9 M22 0.8 L22.5 9 M24 1.2 L24 9 M26 0.5 L25.5 9 M28 1.2 L27 9 M29.8 2 L28.5 9" stroke="#f1c21b" stroke-width="1.6"/>
<path d="M19.3 8.5 H30.2 L29.2 15.5 H20.3Z" fill="#e52a1a"/><path d="M20 9.5 L22 11 L24 9.5 L26 11 L28 9.5 L30 10.5" fill="none" stroke="#fff" stroke-width=".6" opacity=".7"/>
<path d="M2.8 7.3 C2.8 2.3 7 0.4 10.8 0.4 C14.6 0.4 18.8 2.3 18.8 7.3Z" fill="#e0852e"/><path d="M5 3 C7 1.6 9 1.2 11 1.3" stroke="#f2b26a" stroke-width="1" fill="none"/>
<rect x="2.2" y="7.2" width="17.2" height="1.9" rx=".8" fill="#c8d838"/>
<rect x="2.6" y="9" width="16.4" height="3" rx="1.2" fill="#3c2a1e"/><rect x="5" y="9.3" width="3" height="1.2" fill="#b3362a"/><rect x="11" y="9.3" width="3" height="1.2" fill="#b3362a"/><rect x="8.5" y="9.5" width="2" height="1.6" fill="#e8e040"/>
<path d="M2.8 12 H18.8 V13.3 C18.8 15.6 16 16.7 10.8 16.7 C5.6 16.7 2.8 15.6 2.8 13.3Z" fill="#e49040"/>
</svg>
<div class="abs" style="left:1136.2px;top:714.8px;width:16.9px;height:19.9px;background:#007bff;border-radius:2.6px"></div>
<svg class="abs" style="left:1138.6px;top:719.5px" width="11" height="10" viewBox="0 0 11 10"><path d="M5.6 2 H0.9 V9.2 H8 V6" fill="none" stroke="#fff" stroke-width="1.1"/><path d="M3.6 7.2 L3.9 5.4 L8.6 0.7 L10.1 2.2 L5.4 6.9Z" fill="none" stroke="#fff" stroke-width="1"/></svg>
<div class="abs" style="left:1156.1px;top:714.8px;width:16.8px;height:19.9px;background:#ff4f6e;border-radius:2.6px"></div>
<svg class="abs" style="left:1160.8px;top:721.5px" width="7" height="7" viewBox="0 0 7 7"><path d="M0.7 0.7 L6.3 6.3 M6.3 0.7 L0.7 6.3" stroke="#fff" stroke-width="1.2"/></svg>
<div class="abs" style="left:158px;top:747.0px;width:1039.8px;height:47.0px;background:#f9f9f9"></div>
<div class="abs" style="left:208.9px;top:765.1px;width:8.8px;height:8.8px;border:1px solid #a8a8a8;border-radius:1.6px;background:#fff"></div>
<div class="abs" style="left:167.6px;top:764.4px;font-size:9.5px;letter-spacing:-.25px;color:#303030;line-height:14px">11</div>
<div class="abs" style="left:240.8px;top:756.7px;font-size:9.5px;letter-spacing:-.25px;color:#303030;line-height:14.3px">01010300<br>7</div>
<div class="abs" style="left:315.3px;top:764.4px;font-size:9.5px;letter-spacing:-.25px;color:#303030;line-height:14px">1808</div>
<div class="abs" style="left:363.3px;top:764.4px;font-size:9.5px;letter-spacing:-.25px;color:#303030;line-height:14px">Chicken Fillet Breast</div>
<div class="abs" style="left:557.8px;top:764.4px;font-size:9.5px;letter-spacing:-.25px;color:#303030;line-height:14px">4.8€</div>
<div class="abs" style="left:665.6px;top:764.4px;font-size:9.5px;letter-spacing:-.25px;color:#303030;line-height:14px">kg</div>
<div class="abs" style="left:771.5px;top:764.4px;font-size:9.5px;letter-spacing:-.25px;color:#303030;line-height:14px">Freezer</div>
<div class="abs" style="left:869.8px;top:764.4px;font-size:9.5px;letter-spacing:-.25px;color:#303030;line-height:14px">Meat</div>
<div class="abs" style="left:966.4px;top:764.4px;font-size:9.5px;letter-spacing:-.25px;color:#303030;line-height:14px">Poyltry,Chicken</div>
<svg class="abs" style="left:1083px;top:762.0px" width="33" height="21" viewBox="0 0 33 21">
<ellipse cx="16.5" cy="17.6" rx="15.8" ry="2.6" fill="#dedede"/><ellipse cx="16.5" cy="17.2" rx="15" ry="2" fill="#f0f0f0"/>
<path d="M20 1.5 L21 9 M22 0.8 L22.5 9 M24 1.2 L24 9 M26 0.5 L25.5 9 M28 1.2 L27 9 M29.8 2 L28.5 9" stroke="#f1c21b" stroke-width="1.6"/>
<path d="M19.3 8.5 H30.2 L29.2 15.5 H20.3Z" fill="#e52a1a"/><path d="M20 9.5 L22 11 L24 9.5 L26 11 L28 9.5 L30 10.5" fill="none" stroke="#fff" stroke-width=".6" opacity=".7"/>
<path d="M2.8 7.3 C2.8 2.3 7 0.4 10.8 0.4 C14.6 0.4 18.8 2.3 18.8 7.3Z" fill="#e0852e"/><path d="M5 3 C7 1.6 9 1.2 11 1.3" stroke="#f2b26a" stroke-width="1" fill="none"/>
<rect x="2.2" y="7.2" width="17.2" height="1.9" rx=".8" fill="#c8d838"/>
<rect x="2.6" y="9" width="16.4" height="3" rx="1.2" fill="#3c2a1e"/><rect x="5" y="9.3" width="3" height="1.2" fill="#b3362a"/><rect x="11" y="9.3" width="3" height="1.2" fill="#b3362a"/><rect x="8.5" y="9.5" width="2" height="1.6" fill="#e8e040"/>
<path d="M2.8 12 H18.8 V13.3 C18.8 15.6 16 16.7 10.8 16.7 C5.6 16.7 2.8 15.6 2.8 13.3Z" fill="#e49040"/>
</svg>
<div class="abs" style="left:1136.2px;top:761.2px;width:16.9px;height:19.9px;background:#007bff;border-radius:2.6px"></div>
<svg class="abs" style="left:1138.6px;top:766.0px" width="11" height="10" viewBox="0 0 11 10"><path d="M5.6 2 H0.9 V9.2 H8 V6" fill="none" stroke="#fff" stroke-width="1.1"/><path d="M3.6 7.2 L3.9 5.4 L8.6 0.7 L10.1 2.2 L5.4 6.9Z" fill="none" stroke="#fff" stroke-width="1"/></svg>
<div class="abs" style="left:1156.1px;top:761.2px;width:16.8px;height:19.9px;background:#ff4f6e;border-radius:2.6px"></div>
<svg class="abs" style="left:1160.8px;top:768.0px" width="7" height="7" viewBox="0 0 7 7"><path d="M0.7 0.7 L6.3 6.3 M6.3 0.7 L0.7 6.3" stroke="#fff" stroke-width="1.2"/></svg>
<div class="abs" style="left:158px;top:794.0px;width:1039.8px;height:47.0px;background:#ffffff"></div>
<div class="abs" style="left:198.8px;top:794.0px;width:2.4px;height:47.0px;background:#f6f6f6"></div>
<div class="abs" style="left:231.2px;top:794.0px;width:2.4px;height:47.0px;background:#f6f6f6"></div>
<div class="abs" style="left:304.8px;top:794.0px;width:2.4px;height:47.0px;background:#f6f6f6"></div>
<div class="abs" style="left:352.2px;top:794.0px;width:2.4px;height:47.0px;background:#f6f6f6"></div>
<div class="abs" style="left:546.1px;top:794.0px;width:2.4px;height:47.0px;background:#f6f6f6"></div>
<div class="abs" style="left:653.7px;top:794.0px;width:2.4px;height:47.0px;background:#f6f6f6"></div>
<div class="abs" style="left:761.1px;top:794.0px;width:2.4px;height:47.0px;background:#f6f6f6"></div>
<div class="abs" style="left:859.1px;top:794.0px;width:2.4px;height:47.0px;background:#f6f6f6"></div>
<div class="abs" style="left:956.2px;top:794.0px;width:2.4px;height:47.0px;background:#f6f6f6"></div>
<div class="abs" style="left:1072.2px;top:794.0px;width:2.4px;height:47.0px;background:#f6f6f6"></div>
<div class="abs" style="left:1126.2px;top:794.0px;width:2.4px;height:47.0px;background:#f6f6f6"></div>
<div class="abs" style="left:208.9px;top:811.4px;width:8.8px;height:8.8px;border:1px solid #a8a8a8;border-radius:1.6px;background:#fff"></div>
<div class="abs" style="left:167.6px;top:810.6px;font-size:9.5px;letter-spacing:-.25px;color:#303030;line-height:14px">12</div>
<div class="abs" style="left:240.8px;top:803.0px;font-size:9.5px;letter-spacing:-.25px;color:#303030;line-height:14.3px">01020201<br>3</div>
<div class="abs" style="left:315.3px;top:810.6px;font-size:9.5px;letter-spacing:-.25px;color:#303030;line-height:14px">1809</div>
<div class="abs" style="left:363.3px;top:810.6px;font-size:9.5px;letter-spacing:-.05px;color:#303030;line-height:14px">Μοσχαρίσιο Φιλέτο</div>
<div class="abs" style="left:557.8px;top:810.6px;font-size:9.5px;letter-spacing:-.25px;color:#303030;line-height:14px">12€</div>
<div class="abs" style="left:665.6px;top:810.6px;font-size:9.5px;letter-spacing:-.25px;color:#303030;line-height:14px">kg</div>
<div class="abs" style="left:771.5px;top:810.6px;font-size:9.5px;letter-spacing:-.25px;color:#303030;line-height:14px">Freezer</div>
<div class="abs" style="left:869.8px;top:810.6px;font-size:9.5px;letter-spacing:-.25px;color:#303030;line-height:14px">Meat</div>
<div class="abs" style="left:966.4px;top:810.6px;font-size:9.5px;letter-spacing:-.25px;color:#303030;line-height:14px">Beef</div>
<svg class="abs" style="left:1083px;top:808.2px" width="33" height="21" viewBox="0 0 33 21">
<ellipse cx="16.5" cy="17.6" rx="15.8" ry="2.6" fill="#dedede"/><ellipse cx="16.5" cy="17.2" rx="15" ry="2" fill="#f0f0f0"/>
<path d="M20 1.5 L21 9 M22 0.8 L22.5 9 M24 1.2 L24 9 M26 0.5 L25.5 9 M28 1.2 L27 9 M29.8 2 L28.5 9" stroke="#f1c21b" stroke-width="1.6"/>
<path d="M19.3 8.5 H30.2 L29.2 15.5 H20.3Z" fill="#e52a1a"/><path d="M20 9.5 L22 11 L24 9.5 L26 11 L28 9.5 L30 10.5" fill="none" stroke="#fff" stroke-width=".6" opacity=".7"/>
<path d="M2.8 7.3 C2.8 2.3 7 0.4 10.8 0.4 C14.6 0.4 18.8 2.3 18.8 7.3Z" fill="#e0852e"/><path d="M5 3 C7 1.6 9 1.2 11 1.3" stroke="#f2b26a" stroke-width="1" fill="none"/>
<rect x="2.2" y="7.2" width="17.2" height="1.9" rx=".8" fill="#c8d838"/>
<rect x="2.6" y="9" width="16.4" height="3" rx="1.2" fill="#3c2a1e"/><rect x="5" y="9.3" width="3" height="1.2" fill="#b3362a"/><rect x="11" y="9.3" width="3" height="1.2" fill="#b3362a"/><rect x="8.5" y="9.5" width="2" height="1.6" fill="#e8e040"/>
<path d="M2.8 12 H18.8 V13.3 C18.8 15.6 16 16.7 10.8 16.7 C5.6 16.7 2.8 15.6 2.8 13.3Z" fill="#e49040"/>
</svg>
<div class="abs" style="left:1136.2px;top:807.5px;width:16.9px;height:19.9px;background:#007bff;border-radius:2.6px"></div>
<svg class="abs" style="left:1138.6px;top:812.3px" width="11" height="10" viewBox="0 0 11 10"><path d="M5.6 2 H0.9 V9.2 H8 V6" fill="none" stroke="#fff" stroke-width="1.1"/><path d="M3.6 7.2 L3.9 5.4 L8.6 0.7 L10.1 2.2 L5.4 6.9Z" fill="none" stroke="#fff" stroke-width="1"/></svg>
<div class="abs" style="left:1156.1px;top:807.5px;width:16.8px;height:19.9px;background:#ff4f6e;border-radius:2.6px"></div>
<svg class="abs" style="left:1160.8px;top:814.3px" width="7" height="7" viewBox="0 0 7 7"><path d="M0.7 0.7 L6.3 6.3 M6.3 0.7 L0.7 6.3" stroke="#fff" stroke-width="1.2"/></svg>
<div class="abs" style="left:158px;top:267.4px;width:1039.8px;height:2px;background:#f0f0f0"></div><!--/TABLE-->
</body></html>
